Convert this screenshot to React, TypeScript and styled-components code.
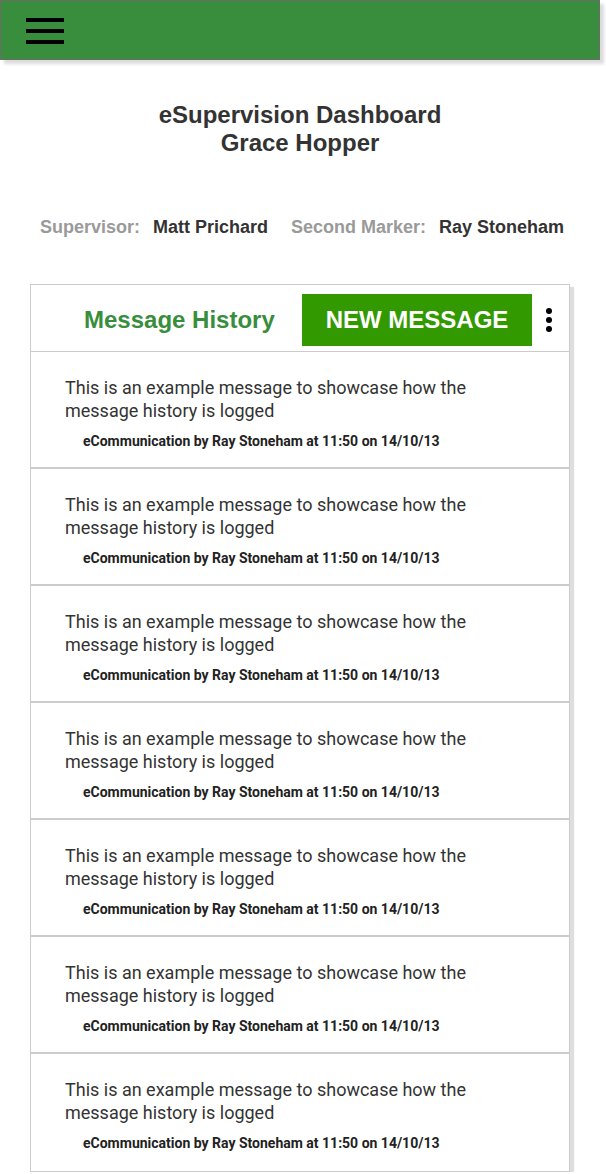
import React from "react";
import styled, { createGlobalStyle } from "styled-components";

const GlobalStyle = createGlobalStyle`
  html, body { margin: 0; padding: 0; background: #ffffff; }
  body { font-family: "Liberation Sans", Arial, sans-serif; }
  * { box-sizing: border-box; }
`;

const Page = styled.div`
  width: 600px;
  display: flex;
  flex-direction: column;
  align-items: center;
`;

const TopBar = styled.header`
  width: 600px;
  height: 60px;
  background: #388e3c;
  border: 1px solid #6b6b6b;
  box-shadow: 4px 4px 3px rgba(0, 0, 0, 0.14);
  display: flex;
  align-items: center;
  padding-left: 25px;
`;

const MenuButton = styled.div`
  width: 38px;
  display: flex;
  flex-direction: column;
  gap: 7px;
  margin-top: 1px;
`;

const MenuLine = styled.span`
  display: block;
  height: 4px;
  background: #000;
`;

const Title = styled.h1`
  margin: 41px 0 0;
  font-family: "Liberation Sans", Arial, sans-serif;
  font-size: 24px;
  line-height: 28px;
  font-weight: 700;
  color: #333333;
  text-align: center;
`;

const People = styled.div`
  margin-top: 60px;
  display: flex;
  align-items: center;
  font-size: 18px;
  line-height: 20px;
  font-weight: 700;
  padding-left: 4px;
`;

const Label = styled.span<{ $first?: boolean }>`
  color: #9a9a9a;
  margin-left: ${(p) => (p.$first ? "0" : "23px")};
  margin-right: 13px;
`;

const Value = styled.span`
  color: #333333;
`;

const Card = styled.section`
  margin-top: 47px;
  width: 540px;
  border: 1px solid #cccccc;
  box-shadow: 4px 3px 1px rgba(0, 0, 0, 0.13);
  background: #fff;
`;

const CardHeader = styled.div`
  height: 67px;
  border-bottom: 1px solid #cccccc;
  display: flex;
  align-items: center;
  padding: 3px 0 0 53px;
`;

const CardTitle = styled.h2`
  margin: 0 30px 0 0;
  font-size: 24px;
  font-weight: 700;
  color: #388e3c;
  width: 188px;
  white-space: nowrap;
`;

const NewButton = styled.button`
  width: 230px;
  height: 52px;
  margin-top: 0;
  background: #339900;
  border: none;
  color: #ffffff;
  font-family: "Liberation Sans", Arial, sans-serif;
  font-size: 24px;
  font-weight: 700;
  padding: 0;
  cursor: pointer;
`;

const MoreButton = styled.div`
  margin-left: 14px;
  display: flex;
  flex-direction: column;
  gap: 3px;
`;

const Dot = styled.span`
  width: 6px;
  height: 6px;
  border-radius: 50%;
  background: #000;
`;

const Item = styled.article<{ $last?: boolean }>`
  height: 117px;
  border-bottom: ${(p) => (p.$last ? "none" : "2px solid #cccccc")};
  padding: 24px 30px 0 34px;
  font-family: Roboto, "Noto Sans", sans-serif;
`;

const Body = styled.p`
  margin: 0;
  font-size: 18px;
  line-height: 23px;
  color: #333333;
  width: 410px;
`;

const Meta = styled.p`
  margin: 11px 0 0 18px;
  font-size: 14px;
  line-height: 16px;
  font-weight: 700;
  color: #222222;
`;

const messages = Array.from({ length: 7 }, () => ({
  text: "This is an example message to showcase how the message history is logged",
  meta: "eCommunication by Ray Stoneham at 11:50 on 14/10/13",
}));

export default function App() {
  return (
    <>
      <GlobalStyle />
      <Page>
        <TopBar>
          <MenuButton>
            <MenuLine />
            <MenuLine />
            <MenuLine />
          </MenuButton>
        </TopBar>
        <Title>
          eSupervision Dashboard
          <br />
          Grace Hopper
        </Title>
        <People>
          <Label $first>Supervisor:</Label>
          <Value>Matt Prichard</Value>
          <Label>Second Marker:</Label>
          <Value>Ray Stoneham</Value>
        </People>
        <Card>
          <CardHeader>
            <CardTitle>Message History</CardTitle>
            <NewButton>NEW MESSAGE</NewButton>
            <MoreButton>
              <Dot />
              <Dot />
              <Dot />
            </MoreButton>
          </CardHeader>
          {messages.map((m, i) => (
            <Item key={i} $last={i === messages.length - 1}>
              <Body>{m.text}</Body>
              <Meta>{m.meta}</Meta>
            </Item>
          ))}
        </Card>
      </Page>
    </>
  );
}
